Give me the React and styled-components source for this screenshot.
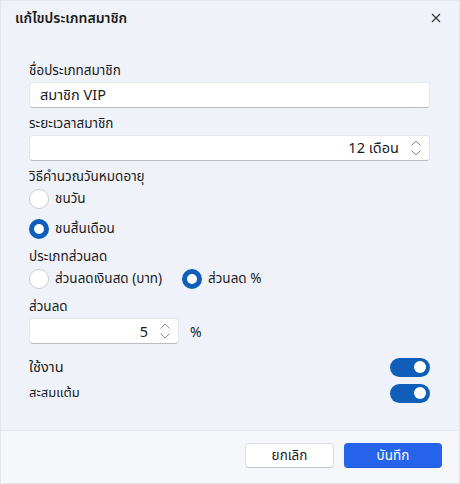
import React, { useState } from 'react';
import styled, { createGlobalStyle } from 'styled-components';

const GlobalStyle = createGlobalStyle`
  html, body {
    margin: 0;
    padding: 0;
    background: #eff3f9;
  }
  body {
    font-family: "Noto Sans", "Noto Sans Thai", "Leelawadee UI", "DejaVu Sans", sans-serif;
    color: #1b1b1b;
  }
  * { box-sizing: border-box; }
`;

const Dialog = styled.div`
  width: 460px;
  height: 484px;
  display: flex;
  flex-direction: column;
  background: #eff3f9;
  border: 1px solid #e2e7ee;
`;

const Header = styled.div`
  height: 34px;
  padding: 0 16px 0 14px;
  display: flex;
  align-items: center;
  justify-content: space-between;
`;

const Title = styled.div`
  font-size: 14px;
  font-weight: 600;
`;

const CloseButton = styled.button`
  border: 0;
  background: none;
  padding: 0;
  width: 14px;
  height: 14px;
  display: flex;
  align-items: center;
  justify-content: center;
  color: #333;
`;

const Content = styled.div`
  flex: 1;
  padding: 25px 29px 0 28px;
  display: flex;
  flex-direction: column;
`;

const Label = styled.div`
  height: 20px;
  line-height: 20px;
  font-size: 13.5px;
  margin-top: ${p => p.$top || 0}px;
  margin-bottom: 2px;
`;

const InputBox = styled.div`
  height: 26px;
  width: ${p => p.$width || '100%'};
  background: #fff;
  border: 1px solid #e4e6ea;
  border-bottom-color: #b9bcc1;
  border-radius: 4px;
  display: flex;
  align-items: center;
  justify-content: ${p => (p.$right ? 'flex-end' : 'flex-start')};
  padding: 0 6px 0 10px;
  font-size: 14.5px;
`;

const InputRow = styled.div`
  display: flex;
  align-items: center;
  gap: 11px;
  font-size: 14px;
`;

const SpinValue = styled.span`
  margin-right: 10px;
`;

const RadioGroup = styled.div`
  display: flex;
  flex-direction: ${p => (p.$row ? 'row' : 'column')};
  gap: ${p => (p.$row ? '0' : '10px')};
  margin-top: 1px;
`;

const RadioItem = styled.label`
  display: flex;
  align-items: center;
  gap: 6px;
  height: 20px;
  font-size: 13.5px;
  min-width: ${p => p.$minWidth || 'auto'};
`;

const RadioCircle = styled.span`
  width: 20px;
  height: 20px;
  border-radius: 50%;
  background: #fff;
  border: ${p => (p.$checked ? '5px solid #0f5fba' : '1px solid #c9ccd1')};
  flex-shrink: 0;
`;

const ToggleRow = styled.div`
  display: flex;
  align-items: center;
  justify-content: space-between;
  height: 26px;
  font-size: ${p => p.$size || 13.5}px;
`;

const ToggleList = styled.div`
  margin-top: 10px;
  display: flex;
  flex-direction: column;
`;

const Toggle = styled.span`
  width: 40px;
  height: 19px;
  border-radius: 10px;
  background: #0f5fba;
  display: flex;
  align-items: center;
  justify-content: flex-end;
  padding-right: 4px;
`;

const Knob = styled.span`
  width: 12px;
  height: 12px;
  border-radius: 50%;
  background: #fff;
`;

const Footer = styled.div`
  height: 53px;
  background: #f5f7fb;
  border-top: 1px solid #e3e7ee;
  display: flex;
  justify-content: flex-end;
  align-items: flex-start;
  padding: 12px 17px 0 0;
  gap: 10px;
`;

const Button = styled.button`
  height: 25px;
  width: ${p => p.$width}px;
  border-radius: 4px;
  font-family: inherit;
  font-size: 13.5px;
  border: 1px solid ${p => (p.$primary ? '#2563eb' : '#dcdfe4')};
  border-bottom-color: ${p => (p.$primary ? '#2159d6' : '#c6c9ce')};
  background: ${p => (p.$primary ? '#2563eb' : '#fff')};
  color: ${p => (p.$primary ? '#fff' : '#1b1b1b')};
`;

function Spinner() {
  return (
    <svg width="14" height="20" viewBox="0 0 14 20" fill="none" stroke="#8a8d92" strokeWidth="1">
      <path d="M2.5 7.5 L7 3 L11.5 7.5" />
      <path d="M2.5 12.5 L7 17 L11.5 12.5" />
    </svg>
  );
}

function Radio({ checked, children, minWidth }) {
  return (
    <RadioItem $minWidth={minWidth}>
      <RadioCircle $checked={checked} />
      {children}
    </RadioItem>
  );
}

export default function App() {
  const [expire] = useState('month');
  const [discount] = useState('percent');

  return (
    <>
      <GlobalStyle />
      <Dialog>
        <Header>
          <Title>แก้ไขประเภทสมาชิก</Title>
          <CloseButton>
            <svg width="10" height="10" viewBox="0 0 10 10" stroke="#333" strokeWidth="1.1">
              <path d="M1 1 L9 9 M9 1 L1 9" />
            </svg>
          </CloseButton>
        </Header>

        <Content>
          <Label>ชื่อประเภทสมาชิก</Label>
          <InputBox>สมาชิก VIP</InputBox>

          <Label $top={5}>ระยะเวลาสมาชิก</Label>
          <InputBox $right>
            <SpinValue>12 เดือน</SpinValue>
            <Spinner />
          </InputBox>

          <Label $top={5}>วิธีคำนวณวันหมดอายุ</Label>
          <RadioGroup>
            <Radio checked={expire === 'day'}>ชนวัน</Radio>
            <Radio checked={expire === 'month'}>ชนสิ้นเดือน</Radio>
          </RadioGroup>

          <Label $top={7}>ประเภทส่วนลด</Label>
          <RadioGroup $row>
            <Radio checked={discount === 'cash'} minWidth="153px">ส่วนลดเงินสด (บาท)</Radio>
            <Radio checked={discount === 'percent'}>ส่วนลด %</Radio>
          </RadioGroup>

          <Label $top={7}>ส่วนลด</Label>
          <InputRow>
            <InputBox $right $width="150px">
              <SpinValue>5</SpinValue>
              <Spinner />
            </InputBox>
            <span>%</span>
          </InputRow>

          <ToggleList>
            <ToggleRow $size={14.5}>
              <span>ใช้งาน</span>
              <Toggle><Knob /></Toggle>
            </ToggleRow>
            <ToggleRow $size={13}>
              <span>สะสมแต้ม</span>
              <Toggle><Knob /></Toggle>
            </ToggleRow>
          </ToggleList>
        </Content>

        <Footer>
          <Button $width={89}>ยกเลิก</Button>
          <Button $primary $width={98}>บันทึก</Button>
        </Footer>
      </Dialog>
    </>
  );
}
